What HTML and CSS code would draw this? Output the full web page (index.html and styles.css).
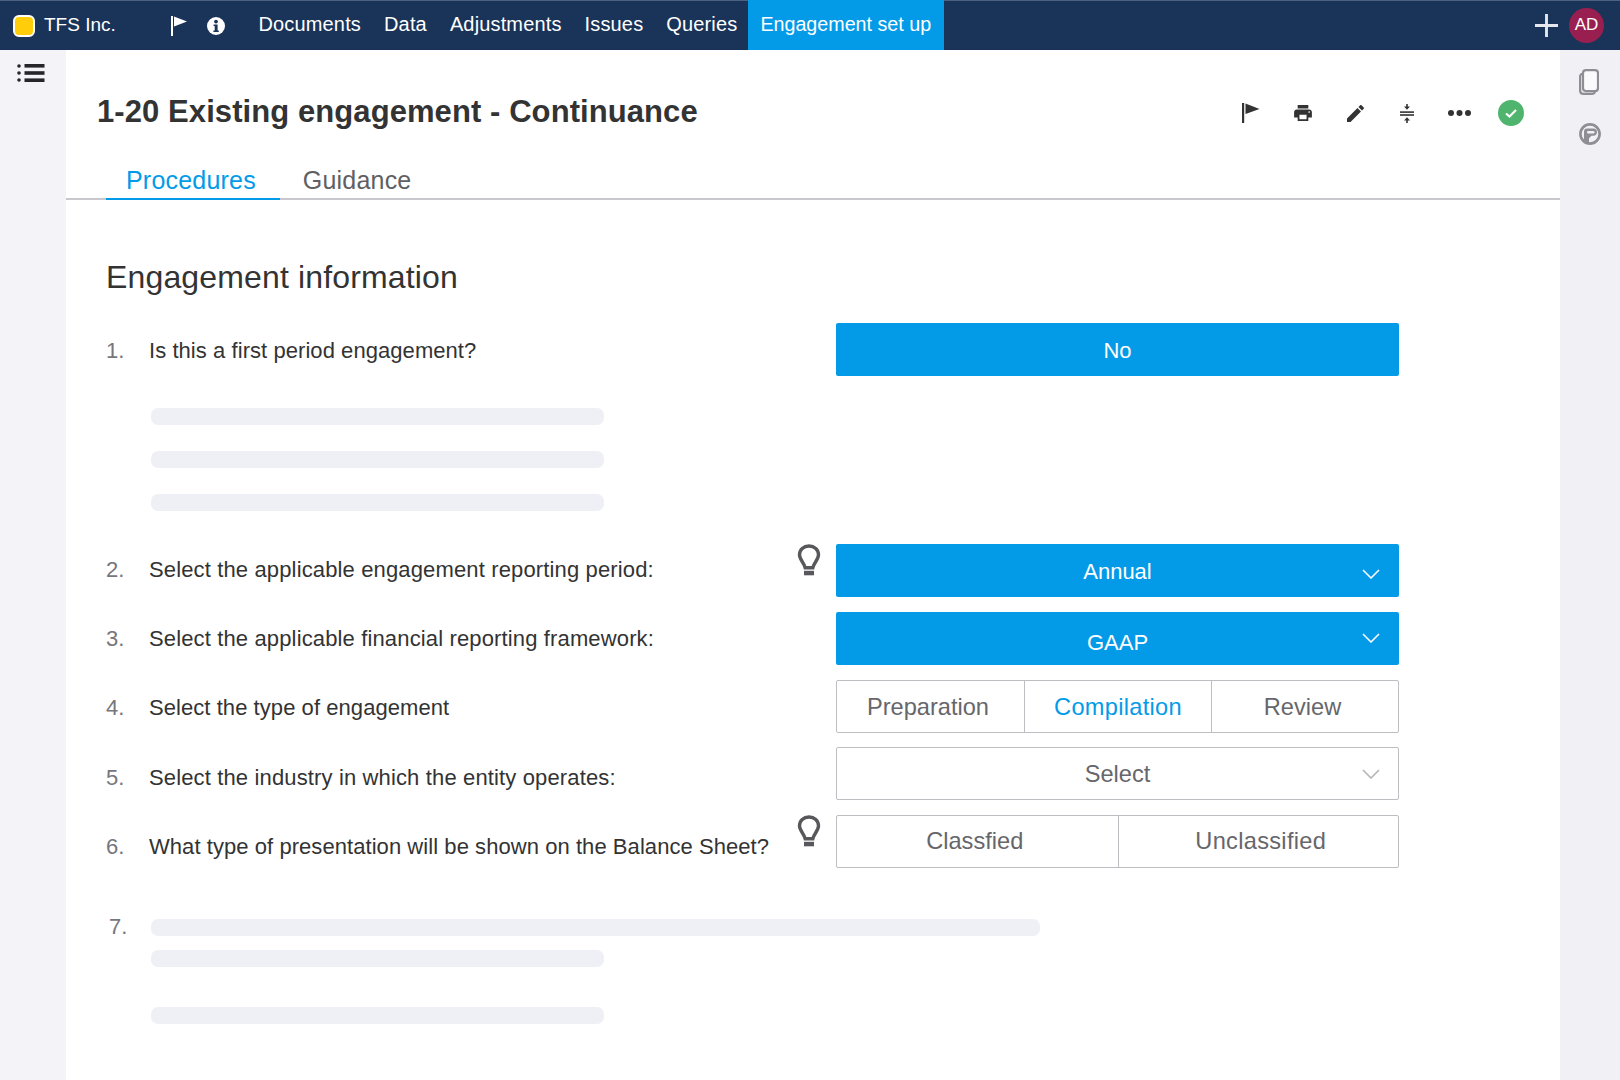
FILE: index.html
```html
<!DOCTYPE html>
<html lang="en">
<head>
<meta charset="utf-8">
<title>1-20 Existing engagement - Continuance</title>
<link rel="stylesheet" href="styles.css">
</head>
<body>
<header class="topbar">
  <span class="logo"></span>
  <span class="company">TFS Inc.</span>
  <svg class="ic-flag-top" viewBox="0 0 17 20"><rect x="0" y="0" width="2" height="20" fill="#fff"/><path d="M3 0.500 L16 5.500 L3 10.500Z" fill="#fff"/></svg>
  <svg class="ic-info" viewBox="0 0 18 18"><circle cx="9" cy="9" r="9" fill="#fff"/><circle cx="9" cy="4.600" r="1.900" fill="#1a3358"/><path d="M6.600 7.400h4v6h1.200v1.700H6.400v-1.700h1.300V9H6.600z" fill="#1a3358"/></svg>
  <nav class="nav">
    <a class="nav-item">Documents</a>
    <a class="nav-item">Data</a>
    <a class="nav-item">Adjustments</a>
    <a class="nav-item">Issues</a>
    <a class="nav-item">Queries</a>
    <a class="nav-item nav-active">Engagement set up</a>
  </nav>
  <svg class="ic-plus" viewBox="0 0 24 24"><path d="M10.500 0h3v10.500H24v3H13.500V24h-3V13.500H0v-3h10.500z" fill="#e6e6ee"/></svg>
  <span class="avatar">AD</span>
</header>
<div class="app">
  <aside class="left-rail">
    <svg class="ic-list" viewBox="0 0 28 18"><g fill="#26262a"><circle cx="2" cy="2" r="1.800"/><circle cx="2" cy="9" r="1.800"/><circle cx="2" cy="16" r="1.800"/><rect x="7.500" y="0" width="20" height="3.600"/><rect x="7.500" y="7.200" width="20" height="3.600"/><rect x="7.500" y="14.400" width="20" height="3.600"/></g></svg>
  </aside>
  <main class="main">
    <div class="head">
      <h1 class="title">1-20 Existing engagement - Continuance</h1>
      <div class="tools">
        <span class="tool-box"><svg class="tool-flag" viewBox="0 0 18 20"><rect x="0" y="0" width="2.200" height="20" fill="#333"/><path d="M3.500 0.500 L17.500 6 L3.500 11Z" fill="#333"/></svg></span>
        <span class="tool-box"><svg class="tool-print" viewBox="2 3 20 18"><path fill="#333" d="M19 8H5c-1.660 0-3 1.340-3 3v6h4v4h12v-4h4v-6c0-1.660-1.340-3-3-3zm-3 11H8v-5h8v5zm3-7c-.55 0-1-.45-1-1s.45-1 1-1 1 .45 1 1-.45 1-1 1zm-1-9H6v4h12V3z"/></svg></span>
        <span class="tool-box"><svg class="tool-pen" viewBox="3 3 18 18"><path fill="#333" d="M3 17.250V21h3.750L17.810 9.940l-3.750-3.750L3 17.250zM20.710 7.040c.39-.39.39-1.020 0-1.410l-2.340-2.340c-.39-.39-1.020-.39-1.410 0l-1.830 1.830 3.750 3.750 1.830-1.830z"/></svg></span>
        <span class="tool-box"><svg class="tool-compress" viewBox="0 0 14 19"><g fill="#333"><rect x="0" y="7.300" width="14" height="1.600"/><rect x="0" y="10.200" width="14" height="1.600"/><path d="M6.200 0h1.600v2.600H10L7 5.800 4 2.600h2.200z"/><path d="M6.200 19h1.600v-2.600H10L7 13.200 4 16.400h2.200z"/></g></svg></span>
        <span class="tool-box"><svg class="tool-dots" viewBox="0 0 23 8"><g fill="#333"><circle cx="3" cy="4" r="3"/><circle cx="11.500" cy="4" r="3"/><circle cx="20" cy="4" r="3"/></g></svg></span>
        <span class="tool-box"><svg class="tool-check" viewBox="0 0 26 26"><circle cx="13" cy="13" r="13" fill="#4fb56e"/><path d="M8 13.500l3.500 3 6.500-6.500" fill="none" stroke="#fff" stroke-width="2.200"/></svg></span>
      </div>
    </div>
    <div class="tabs">
      <a class="tab tab-active">Procedures</a>
      <a class="tab">Guidance</a>
    </div>
    <section class="content">
      <h2 class="section-title">Engagement information</h2>
      <div class="form">
        <div class="questions">
          <div class="q q-first"><span class="num">1.</span><span class="q-text">Is this a first period engagement?</span></div>
          <div class="skeletons">
            <div class="sk"></div><div class="sk"></div><div class="sk"></div>
          </div>
          <div class="q"><span class="num">2.</span><span class="q-text q-wide">Select the applicable engagement reporting period:</span></div>
          <div class="q"><span class="num">3.</span><span class="q-text q-wide">Select the applicable financial reporting framework:</span></div>
          <div class="q"><span class="num">4.</span><span class="q-text">Select the type of engagement</span></div>
          <div class="q"><span class="num">5.</span><span class="q-text q-wide">Select the industry in which the entity operates:</span></div>
          <div class="q"><span class="num">6.</span><span class="q-text">What type of presentation will be shown on the Balance Sheet?</span></div>
          <div class="q q-last"><span class="num num-seven">7.</span>
            <div class="sk-block">
              <div class="sk sk-wide"></div><div class="sk"></div><div class="sk sk-gap"></div>
            </div>
          </div>
        </div>
        <div class="controls">
          <div class="ctl-row"><span class="hint"></span><div class="ctl ctl-blue ctl-no">No</div></div>
          <div class="ctl-row ctl-second">
            <span class="hint"><svg class="bulb" viewBox="0 0 24 32"><path d="M12 2c-5.400 0-9.500 3.700-9.500 8.800 0 5 4.600 7.800 5.700 13h7.600c1.100-5.200 5.700-8 5.700-13C21.500 5.700 17.400 2 12 2z" fill="none" stroke="#58585c" stroke-width="3.400"/><rect x="7" y="26.800" width="10" height="4.500" fill="#58585c"/></svg></span>
            <div class="ctl ctl-blue ctl-annual">Annual<svg class="chev chev-annual" viewBox="0 0 18 10"><path d="M1 1l8 8 8-8" fill="none" stroke="#fff" stroke-width="1.600"/></svg></div>
          </div>
          <div class="ctl-row"><span class="hint"></span>
            <div class="ctl ctl-blue ctl-gaap">GAAP<svg class="chev chev-gaap" viewBox="0 0 18 10"><path d="M1 1l8 8 8-8" fill="none" stroke="#fff" stroke-width="1.600"/></svg></div>
          </div>
          <div class="ctl-row"><span class="hint"></span>
            <div class="ctl seg seg-three">
              <span class="seg-item seg-nudge-left">Preparation</span>
              <span class="seg-item seg-on">Compilation</span>
              <span class="seg-item seg-nudge-left">Review</span>
            </div>
          </div>
          <div class="ctl-row"><span class="hint"></span>
            <div class="ctl ctl-plain">Select<svg class="chev chev-select" viewBox="0 0 18 10"><path d="M1 1l8 8 8-8" fill="none" stroke="#b4b4b8" stroke-width="1.600"/></svg></div>
          </div>
          <div class="ctl-row">
            <span class="hint"><svg class="bulb" viewBox="0 0 24 32"><path d="M12 2c-5.400 0-9.500 3.700-9.500 8.800 0 5 4.600 7.800 5.700 13h7.600c1.100-5.200 5.700-8 5.700-13C21.500 5.700 17.400 2 12 2z" fill="none" stroke="#58585c" stroke-width="3.400"/><rect x="7" y="26.800" width="10" height="4.500" fill="#58585c"/></svg></span>
            <div class="ctl seg seg-two">
              <span class="seg-item seg-nudge-left">Classfied</span>
              <span class="seg-item seg-nudge-right seg-loose">Unclassified</span>
            </div>
          </div>
        </div>
      </div>
    </section>
  </main>
  <aside class="right-rail">
    <svg class="ic-copy" viewBox="0 0 20 26"><rect x="4" y="1.100" width="15" height="21" rx="3" fill="#fafafc" stroke="#8e8e94" stroke-width="2.200"/><path d="M4 4.500C2 5 1.100 6 1.100 7.500V21.500C1.100 23.700 2.300 24.900 4.500 24.900H13C14.500 24.900 15.500 24.300 16 22.500" fill="none" stroke="#8e8e94" stroke-width="2.200"/></svg>
    <svg class="ic-chat" viewBox="0 0 22 22"><circle cx="11" cy="11" r="9.600" fill="none" stroke="#8e8e94" stroke-width="2.600"/><path d="M8 5.500h6.500c2 0 3.500 1.300 3.500 3.500s-1.500 3.700-3.500 3.700h-2l-2.500 2.600V21H6.500C5.500 20 5 19.500 5 19V8.500C5 6.700 6.200 5.500 8 5.500z" fill="#8e8e94"/><rect x="8" y="8" width="7.500" height="2.400" rx="1.200" fill="#f0f0f5"/></svg>
  </aside>
</div>
</body>
</html>
```

FILE: styles.css
```css
* { box-sizing: border-box; }
html, body { margin: 0; padding: 0; }
body {
  width: 1620px; height: 1080px; overflow: hidden; background: #fff;
  font-family: "Liberation Sans", Arial, sans-serif; color: #333;
}
.topbar {
  height: 50px; background: #1a3358; border-top: 1px solid #4d6280;
  display: flex; align-items: center; color: #fff;
}
.logo {
  width: 22px; height: 22px; margin-left: 13px; background: #ffcd0a;
  border: 2px solid #fff; border-radius: 6px;
}
.company { font-size: 19px; margin: -2px 0 0 9px; width: 127px; }
.ic-flag-top { width: 17px; height: 20px; }
.ic-info { width: 18px; height: 18px; margin-left: 18.500px; }
.nav { display: flex; align-self: stretch; margin-left: 34px; }
.nav-item {
  display: flex; align-items: center; font-size: 20px; letter-spacing: .15px;
  padding: 0 0 2px; margin: -1px 23px 0 0;
}
.nav-active {
  background: #039be8; font-size: 19.700px; letter-spacing: 0;
  padding: 0 12.500px 2px; margin: -1px 0 0 -12.500px;
}
.ic-plus { width: 23px; height: 23px; margin-left: auto; }
.avatar {
  width: 35px; height: 35px; border-radius: 50%; background: #981f4f;
  display: flex; align-items: center; justify-content: center; font-size: 17px;
  margin: 0 16px 0 11px; padding-bottom: 1px;
}
.app { display: flex; height: 1030px; }
.left-rail { width: 66px; background: #f4f3f7; padding: 14px 0 0 17px; }
.ic-list { display: block; width: 28px; height: 18px; }
.right-rail {
  width: 60px; background: #f0f0f5; display: flex; flex-direction: column;
  padding: 19px 0 0 19px; gap: 28px;
}
.ic-copy { width: 20px; height: 26px; }
.ic-chat { width: 22px; height: 22px; }
.main { flex: 1; min-width: 0; }
.head {
  height: 56px; margin-top: 34px; display: flex; align-items: center;
  justify-content: space-between; padding: 0 23px 0 31px;
}
.title { margin: 0; font-size: 31px; font-weight: 700; color: #333; letter-spacing: .08px; }
.tools { display: flex; align-items: center; padding-top: 2px; }
.tool-box { width: 52px; display: flex; justify-content: center; align-items: center; }
.tool-flag { width: 18px; height: 20px; }
.tool-print { width: 18px; height: 16px; }
.tool-pen { width: 17px; height: 17px; }
.tool-compress { width: 14px; height: 19px; }
.tool-dots { width: 23px; height: 8px; }
.tool-check { width: 26px; height: 26px; }
.tabs {
  display: flex; height: 60px; padding: 20px 0 0 40px;
  border-bottom: 2px solid #c8c8cc;
}
.tab {
  height: 40px; padding: 0 23px; font-size: 25px; line-height: 40px; color: #5f5f64; letter-spacing: .2px;
}
.tab-active {
  padding: 0 24px 0 20px; color: #039be8; border-bottom: 2px solid #039be8; letter-spacing: .2px;
}
.content { padding: 57px 0 0 40px; }
.section-title { margin: 0 0 25px; font-size: 32px; font-weight: 400; line-height: 40px; color: #333; letter-spacing: .15px; }
.form { display: flex; }
.questions { width: 690px; }
.q { height: 69.400px; display: flex; align-items: center; font-size: 22px; letter-spacing: .06px; }
.q-first { height: 58px; }
.num { width: 43px; color: #76767c; flex: none; }
.num-seven { padding-left: 3px; line-height: 15px; }
.q-text { white-space: nowrap; }
.q-wide { letter-spacing: .14px; }
.skeletons { padding: 28px 0 24px 45px; display: flex; flex-direction: column; gap: 26px; }
.sk { height: 17px; width: 453px; background: #eff0f5; border-radius: 7px; }
.sk-wide { width: 889px; }
.sk-gap { margin-top: 26px; }
.q-last { margin-top: 37px; align-items: flex-start; height: auto; }
.sk-block { margin-left: 2px; display: flex; flex-direction: column; gap: 14px; }
.controls { width: 603px; display: flex; flex-direction: column; gap: 14.750px; padding-top: 1px; }
.ctl-row { display: flex; }
.ctl-second { margin-top: 153.250px; }
.hint { width: 40px; flex: none; }
.bulb { display: block; width: 24px; height: 32px; margin-left: 1px; }
.ctl {
  position: relative; width: 563px; height: 53px; border-radius: 2px;
  display: flex; align-items: center; justify-content: center;
  font-size: 22px;
}
.ctl-blue { background: #039be8; color: #fff; }
.ctl-no { padding-top: 3px; }
.ctl-annual { padding-top: 3px; }
.ctl-gaap { padding-top: 10px; }
.ctl-plain { border: 1px solid #bdbdc2; color: #66666b; font-size: 23.600px; padding-top: 1px; }
.chev { position: absolute; right: 19px; width: 18px; height: 10px; }
.chev-annual { top: 25px; }
.chev-gaap { top: 21px; }
.chev-select { top: 21px; right: 18px; }
.seg { display: grid; border: 1px solid #bdbdc2; color: #66666b; font-size: 23.600px; }
.seg-three { grid-template-columns: repeat(3, 1fr); }
.seg-two { grid-template-columns: repeat(2, 1fr); }
.seg-item {
  height: 100%; display: flex; align-items: center; justify-content: center;
  border-left: 1px solid #bdbdc2;
}
.seg-item:first-child { border-left: 0; }
.seg-three .seg-item { padding-top: 2px; }
.seg-nudge-left { padding-right: 5px; }
.seg-nudge-right { padding-left: 5px; }
.seg-loose { letter-spacing: .3px; }
.seg-on { color: #039be8; letter-spacing: .3px; }
```
